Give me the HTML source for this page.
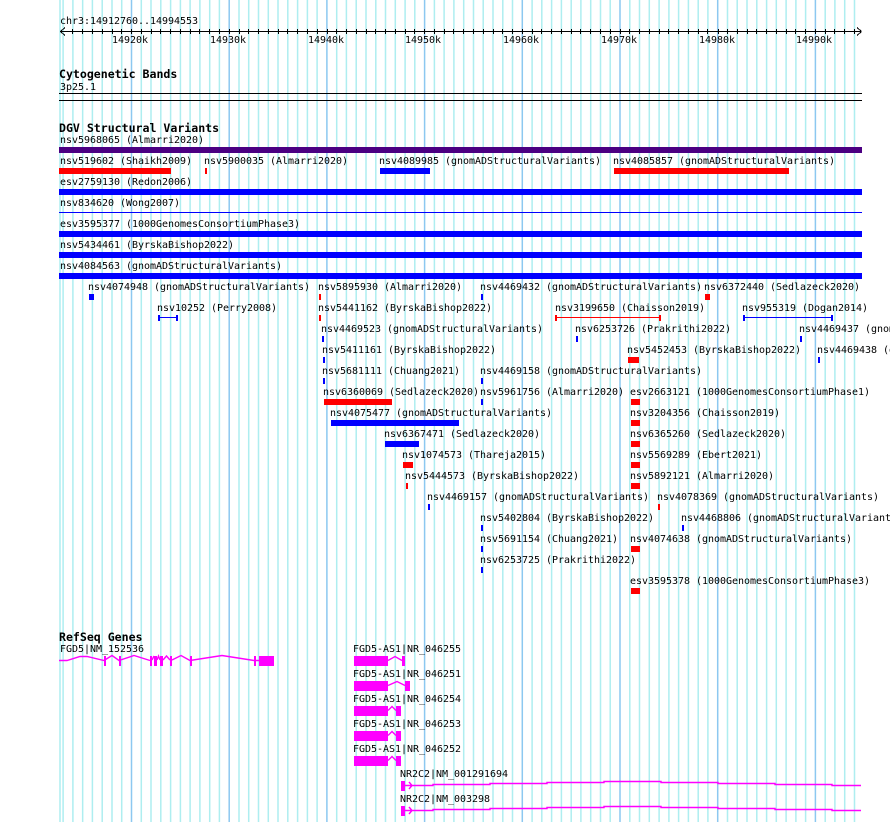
<!DOCTYPE html>
<html><head><meta charset="utf-8"><style>
html,body{margin:0;padding:0;background:#fff;width:890px;height:822px;overflow:hidden}
svg{position:absolute;left:0;top:0;display:block}
text{font-family:"DejaVu Sans Mono","Liberation Mono",monospace;font-size:10px;fill:#000;white-space:pre;letter-spacing:-0.02px;transform:translateY(-1px)}
text.b{font-family:"DejaVu Sans Mono","Liberation Mono",monospace;font-weight:bold;font-size:11.6px;transform:none}
.c{shape-rendering:crispEdges}
</style></head><body>
<svg width="890" height="822" viewBox="0 0 890 822">
<g fill="none">
<path stroke="#aeeef0" stroke-width="1.5" d="M60 0V822M63.1 0V822M72.9 0V822M82.65 0V822M92.4 0V822M102.2 0V822M112 0V822M121.7 0V822M141.3 0V822M151 0V822M160.8 0V822M170.6 0V822M180.4 0V822M190.1 0V822M199.9 0V822M209.7 0V822M219.4 0V822M239 0V822M248.7 0V822M258.5 0V822M268.3 0V822M278 0V822M287.8 0V822M297.6 0V822M307.4 0V822M317.1 0V822M336.7 0V822M346.4 0V822M356.2 0V822M366 0V822M375.8 0V822M385.5 0V822M395.3 0V822M405.1 0V822M414.8 0V822M434.4 0V822M444.1 0V822M453.9 0V822M463.7 0V822M473.5 0V822M483.2 0V822M493 0V822M502.8 0V822M512.5 0V822M532.1 0V822M541.8 0V822M551.6 0V822M561.4 0V822M571.2 0V822M580.9 0V822M590.7 0V822M600.5 0V822M610.2 0V822M629.8 0V822M639.5 0V822M649.3 0V822M659.1 0V822M668.9 0V822M678.6 0V822M688.4 0V822M698.2 0V822M707.9 0V822M727.5 0V822M737.2 0V822M747 0V822M756.8 0V822M766.6 0V822M776.3 0V822M786.1 0V822M795.9 0V822M805.6 0V822M825.2 0V822M834.9 0V822M844.7 0V822M854.5 0V822"/>
<path stroke="#8cc8f0" stroke-width="1.5" d="M131.5 0V822M229.2 0V822M326.9 0V822M424.6 0V822M522.3 0V822M620 0V822M717.7 0V822M815.4 0V822"/>
</g>
<g class="c" stroke="#000" fill="none" stroke-width="1">
<path d="M60 31.5H861"/>
<path d="M60.5 31.5L65 27.5M60.5 31.5L65 35.5M861.5 31.5L857 27.5M861.5 31.5L857 35.5"/>
<path d="M72.5 29V34M82.5 29V34M92.5 29V34M102.5 29V34M112.5 29V34M121.5 29V34M131.5 29V34M141.5 29V34M151.5 29V34M160.5 29V34M170.5 29V34M180.5 29V34M190.5 29V34M199.5 29V34M209.5 29V34M219.5 29V34M229.5 29V34M239.5 29V34M248.5 29V34M258.5 29V34M268.5 29V34M278.5 29V34M287.5 29V34M297.5 29V34M307.5 29V34M317.5 29V34M327.5 29V34M336.5 29V34M346.5 29V34M356.5 29V34M366.5 29V34M375.5 29V34M385.5 29V34M395.5 29V34M405.5 29V34M414.5 29V34M424.5 29V34M434.5 29V34M444.5 29V34M453.5 29V34M463.5 29V34M473.5 29V34M483.5 29V34M493.5 29V34M502.5 29V34M512.5 29V34M522.5 29V34M532.5 29V34M541.5 29V34M551.5 29V34M561.5 29V34M571.5 29V34M580.5 29V34M590.5 29V34M600.5 29V34M610.5 29V34M620.5 29V34M629.5 29V34M639.5 29V34M649.5 29V34M659.5 29V34M668.5 29V34M678.5 29V34M688.5 29V34M698.5 29V34M707.5 29V34M718.5 29V34M727.5 29V34M737.5 29V34M747.5 29V34M756.5 29V34M766.5 29V34M776.5 29V34M786.5 29V34M795.5 29V34M805.5 29V34M815.5 29V34M825.5 29V34M834.5 29V34M844.5 29V34M854.5 29V34"/>
<path d="M59 93.5H862M59 100.5H862"/>
</g>
<text x="60" y="25">chr3:14912760..14994553</text>
<text x="112" y="44">14920k</text><text x="210" y="44">14930k</text><text x="308" y="44">14940k</text><text x="405" y="44">14950k</text><text x="503" y="44">14960k</text><text x="601" y="44">14970k</text><text x="699" y="44">14980k</text><text x="796" y="44">14990k</text>
<text class="b" x="59" y="78">Cytogenetic Bands</text>
<text x="60" y="91">3p25.1</text>
<text class="b" x="59" y="132">DGV Structural Variants</text>
<g class="c">
<rect x="59" y="147" width="803" height="6" fill="#4b0082"/>
<rect x="59" y="168" width="112" height="6" fill="#f00"/><rect x="205" y="168" width="2" height="6" fill="#f00"/><rect x="380" y="168" width="50" height="6" fill="#00f"/><rect x="614" y="168" width="175" height="6" fill="#f00"/>
<rect x="59" y="189" width="803" height="6" fill="#00f"/>
<rect x="59" y="212" width="803" height="1" fill="#00f"/>
<rect x="59" y="231" width="803" height="6" fill="#00f"/>
<rect x="59" y="252" width="803" height="6" fill="#00f"/>
<rect x="59" y="273" width="803" height="6" fill="#00f"/>
<g fill="#00f">
<rect x="89" y="294" width="5" height="6"/><rect x="481" y="294" width="2" height="6"/>
<rect x="158" y="315" width="2" height="6"/><rect x="176" y="315" width="2" height="6"/><rect x="158" y="317" width="20" height="1"/>
<rect x="743" y="315" width="2" height="6"/><rect x="831" y="315" width="2" height="6"/><rect x="743" y="317" width="90" height="1"/>
<rect x="322" y="336" width="2" height="6"/><rect x="576" y="336" width="2" height="6"/><rect x="800" y="336" width="2" height="6"/>
<rect x="323" y="357" width="2" height="6"/><rect x="818" y="357" width="2" height="6"/>
<rect x="323" y="378" width="2" height="6"/><rect x="481" y="378" width="2" height="6"/>
<rect x="481" y="399" width="2" height="6"/>
<rect x="331" y="420" width="128" height="6"/>
<rect x="385" y="441" width="34" height="6"/>
<rect x="428" y="504" width="2" height="6"/>
<rect x="481" y="525" width="2" height="6"/><rect x="682" y="525" width="2" height="6"/>
<rect x="481" y="546" width="2" height="6"/>
<rect x="481" y="567" width="2" height="6"/>
</g>
<g fill="#f00">
<rect x="319" y="294" width="2" height="6"/><rect x="705" y="294" width="5" height="6"/>
<rect x="319" y="315" width="2" height="6"/>
<rect x="555" y="315" width="2" height="6"/><rect x="659" y="315" width="2" height="6"/><rect x="555" y="317" width="106" height="1"/>
<rect x="628" y="357" width="11" height="6"/>
<rect x="324" y="399" width="68" height="6"/><rect x="631" y="399" width="9" height="6"/>
<rect x="631" y="420" width="9" height="6"/>
<rect x="631" y="441" width="9" height="6"/>
<rect x="403" y="462" width="10" height="6"/><rect x="631" y="462" width="9" height="6"/>
<rect x="406" y="483" width="2" height="6"/><rect x="631" y="483" width="9" height="6"/>
<rect x="658" y="504" width="2" height="6"/>
<rect x="631" y="546" width="9" height="6"/>
<rect x="631" y="588" width="9" height="6"/>
</g>
</g>
<text x="60" y="144">nsv5968065 (Almarri2020)</text>
<text x="60" y="165">nsv519602 (Shaikh2009)</text><text x="204" y="165">nsv5900035 (Almarri2020)</text><text x="379" y="165">nsv4089985 (gnomADStructuralVariants)</text><text x="613" y="165">nsv4085857 (gnomADStructuralVariants)</text>
<text x="60" y="186">esv2759130 (Redon2006)</text>
<text x="60" y="207">nsv834620 (Wong2007)</text>
<text x="60" y="228">esv3595377 (1000GenomesConsortiumPhase3)</text>
<text x="60" y="249">nsv5434461 (ByrskaBishop2022)</text>
<text x="60" y="270">nsv4084563 (gnomADStructuralVariants)</text>
<text x="88" y="291">nsv4074948 (gnomADStructuralVariants)</text><text x="318" y="291">nsv5895930 (Almarri2020)</text><text x="480" y="291">nsv4469432 (gnomADStructuralVariants)</text><text x="704" y="291">nsv6372440 (Sedlazeck2020)</text>
<text x="157" y="312">nsv10252 (Perry2008)</text><text x="318" y="312">nsv5441162 (ByrskaBishop2022)</text><text x="555" y="312">nsv3199650 (Chaisson2019)</text><text x="742" y="312">nsv955319 (Dogan2014)</text>
<text x="321" y="333">nsv4469523 (gnomADStructuralVariants)</text><text x="575" y="333">nsv6253726 (Prakrithi2022)</text><text x="799" y="333">nsv4469437 (gnomADStructuralVariants)</text>
<text x="322" y="354">nsv5411161 (ByrskaBishop2022)</text><text x="627" y="354">nsv5452453 (ByrskaBishop2022)</text><text x="817" y="354">nsv4469438 (gnomADStructuralVariants)</text>
<text x="322" y="375">nsv5681111 (Chuang2021)</text><text x="480" y="375">nsv4469158 (gnomADStructuralVariants)</text>
<text x="323" y="396">nsv6360069 (Sedlazeck2020)</text><text x="480" y="396">nsv5961756 (Almarri2020)</text><text x="630" y="396">esv2663121 (1000GenomesConsortiumPhase1)</text>
<text x="330" y="417">nsv4075477 (gnomADStructuralVariants)</text><text x="630" y="417">nsv3204356 (Chaisson2019)</text>
<text x="384" y="438">nsv6367471 (Sedlazeck2020)</text><text x="630" y="438">nsv6365260 (Sedlazeck2020)</text>
<text x="402" y="459">nsv1074573 (Thareja2015)</text><text x="630" y="459">nsv5569289 (Ebert2021)</text>
<text x="405" y="480">nsv5444573 (ByrskaBishop2022)</text><text x="630" y="480">nsv5892121 (Almarri2020)</text>
<text x="427" y="501">nsv4469157 (gnomADStructuralVariants)</text><text x="657" y="501">nsv4078369 (gnomADStructuralVariants)</text>
<text x="480" y="522">nsv5402804 (ByrskaBishop2022)</text><text x="681" y="522">nsv4468806 (gnomADStructuralVariants)</text>
<text x="480" y="543">nsv5691154 (Chuang2021)</text><text x="630" y="543">nsv4074638 (gnomADStructuralVariants)</text>
<text x="480" y="564">nsv6253725 (Prakrithi2022)</text>
<text x="630" y="585">esv3595378 (1000GenomesConsortiumPhase3)</text>
<text class="b" x="59" y="641">RefSeq Genes</text>
<text x="60" y="653">FGD5|NM_152536</text>
<text x="353" y="653">FGD5-AS1|NR_046255</text><text x="353" y="678">FGD5-AS1|NR_046251</text><text x="353" y="703">FGD5-AS1|NR_046254</text><text x="353" y="728">FGD5-AS1|NR_046253</text><text x="353" y="753">FGD5-AS1|NR_046252</text>
<text x="400" y="778">NR2C2|NM_001291694</text><text x="400" y="803">NR2C2|NM_003298</text>
<g class="c" fill="#f0f">
<rect x="104" y="656" width="2" height="10"/><rect x="119" y="656" width="2" height="10"/><rect x="150" y="656" width="2" height="10"/><rect x="154" y="656" width="3" height="10"/><rect x="160" y="656" width="3" height="10"/><rect x="170" y="656" width="2" height="10"/><rect x="190" y="656" width="2" height="10"/><rect x="254" y="656" width="2" height="10"/><rect x="259" y="656" width="15" height="10"/>
<rect x="354" y="656" width="34" height="10"/><rect x="402" y="656" width="3" height="10"/>
<rect x="354" y="681" width="34" height="10"/><rect x="405" y="681" width="5" height="10"/>
<rect x="354" y="706" width="34" height="10"/><rect x="396" y="706" width="5" height="10"/>
<rect x="354" y="731" width="34" height="10"/><rect x="396" y="731" width="5" height="10"/>
<rect x="354" y="756" width="34" height="10"/><rect x="396" y="756" width="5" height="10"/>
<rect x="401" y="781" width="4" height="10"/><rect x="401" y="806" width="4" height="10"/>
</g>
<g fill="none" stroke="#f0f" stroke-width="1.4">
<path d="M59 660.5H67L80 656.5H87L104 660.5L112 655.5L119 660.5L134 655.5L150 660.5M152 660L154 656M157 660L158.5 656L160 660M163 660L166.5 656L170 660M172 660L181 655.5L190 660.5L222 655.5L254 660.5H259"/>
<path d="M388 660.5L395 656.5L402 660.5M388 685.5L397 681.5L405 685.5M388 710.5L392 706.5L396 710.5M388 735.5L392 731.5L396 735.5M388 760.5L392 756.5L396 760.5"/>
<path d="M405 785.5H433V784.5H490V783.5H547V782.5H604V781.5H661V782.5H718V783.5H775V784.5H832V785.5H861M409 782L412 785.5L409 789"/>
<path d="M405 810.5H433V809.5H490V808.5H547V807.5H604V806.5H661V807.5H718V808.5H775V809.5H832V810.5H861M409 807L412 810.5L409 814"/>
</g>
</svg>
</body></html>
